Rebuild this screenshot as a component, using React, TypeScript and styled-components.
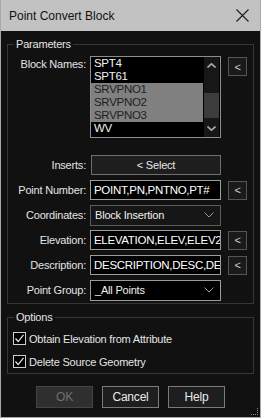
import styled, { createGlobalStyle } from "styled-components";

const Global = createGlobalStyle`
  body {
    margin: 0;
    background: #111;
    font-family: "Liberation Sans", Arial, sans-serif;
  }
`;

const Window = styled.div`
  position: relative;
  width: 261px;
  height: 418px;
  box-sizing: border-box;
  border: 1px solid #a8a8a8;
  border-top: none;
  background: #111111;
  color: #e4e4e4;
  font-size: 11px;
  letter-spacing: -0.2px;
`;

const TitleBar = styled.div`
  height: 31px;
  display: flex;
  align-items: center;
  justify-content: space-between;
  padding: 0 11px 0 8px;
  background: #c2c2c2;
  color: #111;
  font-size: 12px;
  letter-spacing: 0;
`;

const Body = styled.div`
  padding: 0 6px;
`;

const Group = styled.fieldset<{ $top: number }>`
  margin: ${(p) => p.$top}px 0 0;
  padding: 4px 0 3px;
  border: 1px solid #363636;
  min-width: 0;
`;

const Legend = styled.legend`
  margin-left: 6px;
  padding: 0 2px;
  line-height: 15px;
  color: #e4e4e4;
`;

const Rows = styled.div`
  display: flex;
  flex-direction: column;
  gap: 5px;
`;

const Row = styled.div<{ $top?: boolean }>`
  display: flex;
  align-items: ${(p) => (p.$top ? "flex-start" : "center")};
  height: ${(p) => (p.$top ? "82px" : "20px")};
  margin-bottom: ${(p) => (p.$top ? "12px" : "0")};
`;

const Label = styled.div<{ $top?: boolean }>`
  width: 78px;
  flex-shrink: 0;
  margin-right: 4px;
  text-align: right;
  white-space: nowrap;
  padding-top: ${(p) => (p.$top ? "2px" : "0")};
`;

const ListBox = styled.div`
  width: 131px;
  height: 82px;
  flex-shrink: 0;
  box-sizing: border-box;
  border: 1px solid #8e8e8e;
  background: #000;
  display: flex;
  padding: 0 1px 0 0;
`;

const Items = styled.div`
  flex: 1;
  overflow: hidden;
`;

const Item = styled.div<{ $sel?: boolean }>`
  height: 13px;
  line-height: 13px;
  padding-left: 3px;
  margin-right: 1px;
  font-size: 11.5px;
  letter-spacing: -0.3px;
  background: ${(p) => (p.$sel ? "#808080" : "transparent")};
  color: ${(p) => (p.$sel ? "#1e1e1e" : "#f2f2f2")};
`;

const ScrollBar = styled.div`
  width: 15px;
  display: flex;
  flex-direction: column;
  background: #171717;
`;

const ScrollArrow = styled.div`
  height: 17px;
  display: flex;
  align-items: center;
  justify-content: center;
`;

const Track = styled.div`
  flex: 1;
`;

const Thumb = styled.div`
  margin-top: 19px;
  height: 25px;
  background: #3c3c3c;
`;

const PickButton = styled.div<{ $top?: boolean }>`
  width: 19px;
  height: 19px;
  flex-shrink: 0;
  box-sizing: border-box;
  margin-left: 7px;
  margin-top: ${(p) => (p.$top ? "1px" : "0")};
  border: 1px solid #555;
  background: #1a1a1a;
  color: #cfcfcf;
  display: flex;
  align-items: center;
  justify-content: center;
  font-size: 11px;
`;

const SelectButton = styled.div`
  width: 130px;
  height: 20px;
  flex-shrink: 0;
  margin-left: 1px;
  box-sizing: border-box;
  border: 1px solid #6e6e6e;
  background: #1e1e1e;
  color: #e8e8e8;
  display: flex;
  align-items: center;
  justify-content: center;
`;

const TextBox = styled.div`
  width: 131px;
  height: 20px;
  flex-shrink: 0;
  box-sizing: border-box;
  border: 1px solid #9c9c9c;
  background: #000;
  color: #fff;
  padding-left: 3px;
  font-size: 11.5px;
  letter-spacing: -0.3px;
  line-height: 18px;
  white-space: nowrap;
  overflow: hidden;
`;

const Combo = styled.div<{ $dark?: boolean }>`
  width: 131px;
  height: 21px;
  flex-shrink: 0;
  box-sizing: border-box;
  border: 1px solid ${(p) => (p.$dark ? "#9a9a9a" : "#5c5c5c")};
  background: ${(p) => (p.$dark ? "#000" : "#161616")};
  color: #f0f0f0;
  padding: 0 6px 0 4px;
  display: flex;
  align-items: center;
  justify-content: space-between;
`;

const CheckRows = styled.div`
  display: flex;
  flex-direction: column;
  gap: 6px;
  padding: 1px 0 0 5px;
`;

const CheckRow = styled.div`
  display: flex;
  align-items: center;
  height: 17px;
  gap: 3px;
`;

const Box = styled.div`
  width: 13px;
  height: 13px;
  box-sizing: border-box;
  border: 1px solid #cfcfcf;
  background: #000;
  display: flex;
  align-items: center;
  justify-content: center;
`;

const Buttons = styled.div`
  display: flex;
  justify-content: center;
  gap: 9px;
  margin-top: 12px;
`;

const DialogButton = styled.div<{ $disabled?: boolean }>`
  width: 57px;
  height: 22px;
  box-sizing: border-box;
  border: 1px solid ${(p) => (p.$disabled ? "#444" : "#7a7a7a")};
  background: ${(p) => (p.$disabled ? "#2f2f2f" : "#1e1e1e")};
  color: ${(p) => (p.$disabled ? "#707070" : "#eaeaea")};
  display: flex;
  align-items: center;
  justify-content: center;
  font-size: 12px;
`;

const Grip = styled.svg`
  position: absolute;
  right: 2px;
  bottom: 2px;
`;

const Chevron = ({ up }: { up?: boolean }) => (
  <svg width="9" height="5" viewBox="0 0 9 5">
    <path
      d={up ? "M0.5 4.5 L4.5 0.8 L8.5 4.5" : "M0.5 0.5 L4.5 4.2 L8.5 0.5"}
      fill="none"
      stroke="#a8a8a8"
      strokeWidth="1.6"
    />
  </svg>
);

const ComboArrow = () => (
  <svg width="10" height="6" viewBox="0 0 10 6">
    <path d="M0.5 0.5 L5 5 L9.5 0.5" fill="none" stroke="#9a9a9a" strokeWidth="1" />
  </svg>
);

const Check = () => (
  <svg width="11" height="11" viewBox="0 0 11 11">
    <path d="M1.5 5.5 L4.2 8.5 L9.5 1.8" fill="none" stroke="#e8e8e8" strokeWidth="1.2" />
  </svg>
);

const blocks = ["SPT4", "SPT61", "SRVPNO1", "SRVPNO2", "SRVPNO3", "WV"];
const selected = ["SRVPNO1", "SRVPNO2", "SRVPNO3"];

const fields: { label: string; kind: "text" | "combo"; value: string; pick?: boolean; dark?: boolean }[] = [
  { label: "Point Number:", kind: "text", value: "POINT,PN,PNTNO,PT#", pick: true },
  { label: "Coordinates:", kind: "combo", value: "Block Insertion" },
  { label: "Elevation:", kind: "text", value: "ELEVATION,ELEV,ELEV2", pick: true },
  { label: "Description:", kind: "text", value: "DESCRIPTION,DESC,DESC2", pick: true },
  { label: "Point Group:", kind: "combo", value: "_All Points", dark: true },
];

export default function App() {
  return (
    <>
      <Global />
      <Window>
        <TitleBar>
          <span>Point Convert Block</span>
          <svg width="13" height="13" viewBox="0 0 13 13">
            <path d="M0.5 0.5 L12.5 12.5 M12.5 0.5 L0.5 12.5" stroke="#1a1a1a" strokeWidth="1.1" />
          </svg>
        </TitleBar>
        <Body>
          <Group $top={6}>
            <Legend>Parameters</Legend>
            <Rows>
              <Row $top>
                <Label $top>Block Names:</Label>
                <ListBox>
                  <Items>
                    {blocks.map((b) => (
                      <Item key={b} $sel={selected.includes(b)}>
                        {b}
                      </Item>
                    ))}
                  </Items>
                  <ScrollBar>
                    <ScrollArrow>
                      <Chevron up />
                    </ScrollArrow>
                    <Track>
                      <Thumb />
                    </Track>
                    <ScrollArrow>
                      <Chevron />
                    </ScrollArrow>
                  </ScrollBar>
                </ListBox>
                <PickButton $top>&lt;</PickButton>
              </Row>
              <Row>
                <Label>Inserts:</Label>
                <SelectButton>&lt; Select</SelectButton>
              </Row>
              {fields.map((f) => (
                <Row key={f.label}>
                  <Label>{f.label}</Label>
                  {f.kind === "text" ? (
                    <TextBox>{f.value}</TextBox>
                  ) : (
                    <Combo $dark={f.dark}>
                      <span>{f.value}</span>
                      <ComboArrow />
                    </Combo>
                  )}
                  {f.pick && <PickButton>&lt;</PickButton>}
                </Row>
              ))}
            </Rows>
          </Group>
          <Group $top={6}>
            <Legend>Options</Legend>
            <CheckRows>
              <CheckRow>
                <Box>
                  <Check />
                </Box>
                <span>Obtain Elevation from Attribute</span>
              </CheckRow>
              <CheckRow>
                <Box>
                  <Check />
                </Box>
                <span>Delete Source Geometry</span>
              </CheckRow>
            </CheckRows>
          </Group>
          <Buttons>
            <DialogButton $disabled>OK</DialogButton>
            <DialogButton>Cancel</DialogButton>
            <DialogButton>Help</DialogButton>
          </Buttons>
        </Body>
        <Grip width="8" height="8" viewBox="0 0 8 8">
          {[0, 2, 4, 6].map((i) => (
            <rect key={"v" + i} x="7" y={i + 1} width="1" height="1" fill="#8a8a8a" />
          ))}
          {[0, 2, 4].map((i) => (
            <rect key={"h" + i} x={i + 1} y="7" width="1" height="1" fill="#8a8a8a" />
          ))}
        </Grip>
      </Window>
    </>
  );
}
